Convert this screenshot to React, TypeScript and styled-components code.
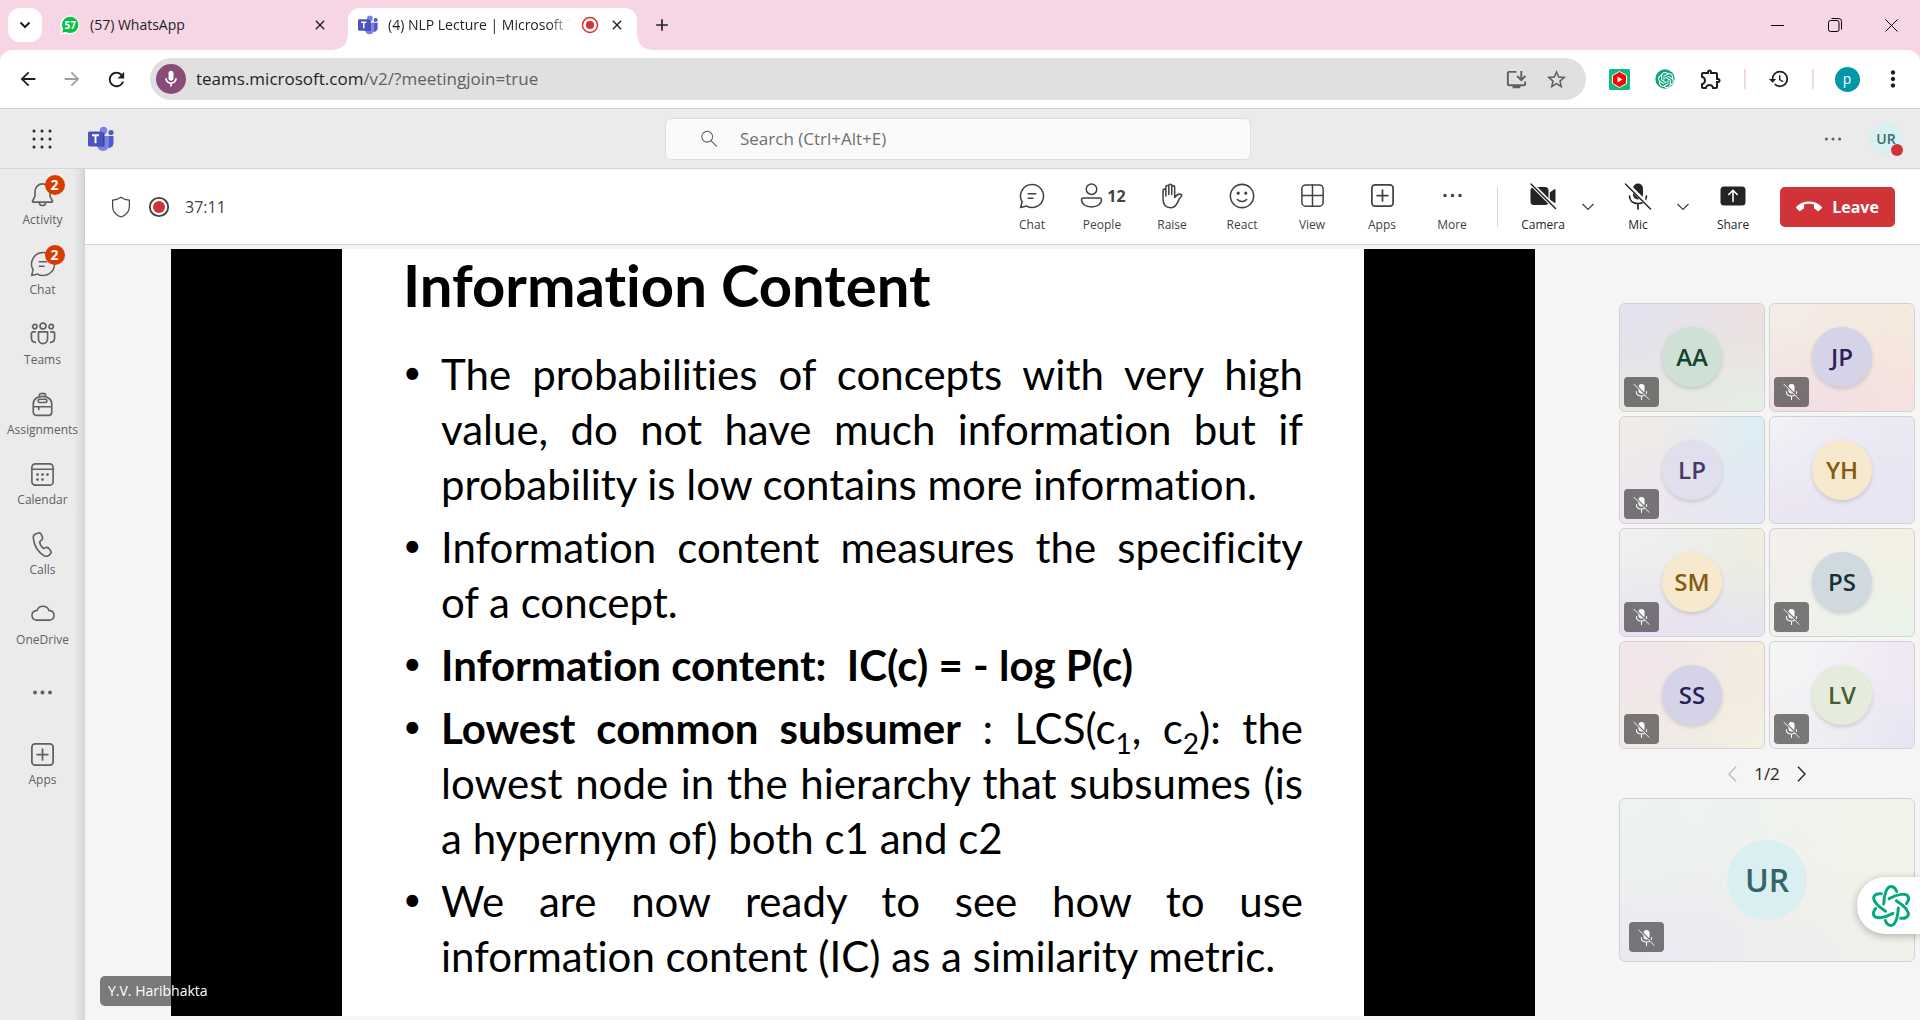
import React from 'react';
import styled, { createGlobalStyle, css } from 'styled-components';
import {
  MdArrowBack, MdArrowForward, MdCallEnd, MdHistory, MdMoreVert, MdOutlineExtension,
  MdOutlineInstallDesktop, MdOutlineMic, MdRefresh, MdStarBorder, MdAdd, MdClose,
} from 'react-icons/md';
import { SiOpenai } from 'react-icons/si';

const GlobalStyle = createGlobalStyle`
  * { box-sizing: border-box; }
  body {
    margin: 0;
    background: #f5f5f5;
    color: #242424;
    font-family: "Open Sans", "Noto Sans", sans-serif;
    font-size: 16px;
  }
  button { font: inherit; color: inherit; border: 0; background: none; padding: 0; cursor: pointer; }
  a { color: inherit; text-decoration: none; }
  svg { display: block; flex: none; }
`;

/* ---------- layout ---------- */

const Page = styled.div`
  min-height: 100vh;
  display: flex;
  flex-direction: column;
`;

const Body = styled.div`
  flex: 1;
  display: flex;
`;

const Main = styled.main`
  flex: 1;
  min-width: 0;
  display: flex;
  flex-direction: column;
`;

/* ---------- browser ---------- */

const TabStrip = styled.header`
  display: flex;
  align-items: flex-start;
  height: 50px;
  padding: 8px 0 0 8px;
  background: #f6d5e4;
`;

const TabSearch = styled.button`
  display: grid;
  place-items: center;
  width: 34px;
  height: 34px;
  margin-right: 6px;
  border-radius: 12px;
  background: #fff;
`;

const Tab = styled.div<{ $active?: boolean }>`
  position: relative;
  display: flex;
  align-items: center;
  gap: 10px;
  width: ${p => (p.$active ? 289 : 300)}px;
  height: ${p => (p.$active ? 42 : 34)}px;
  padding: ${p => (p.$active ? '0 12px 8px 10px' : '0 20px 0 12px')};
  border-radius: 12px 12px 0 0;
  color: #1f1f1f;
  ${p => p.$active && css`
    background: #fff;
    &::before, &::after {
      content: '';
      position: absolute;
      bottom: 0;
      width: 14px;
      height: 14px;
    }
    &::before { right: 100%; background: radial-gradient(circle at 0 0, transparent 13px, #fff 14px); }
    &::after { left: 100%; background: radial-gradient(circle at 100% 0, transparent 13px, #fff 14px); }
  `}
`;

const TabTitle = styled.span<{ $fade?: boolean }>`
  flex: 1;
  min-width: 0;
  overflow: hidden;
  white-space: nowrap;
  font-size: 14px;
  line-height: 20px;
  ${p => p.$fade && css`mask-image: linear-gradient(90deg, #000 88%, transparent);`}
`;

const SmallButton = styled.button`
  display: grid;
  place-items: center;
  width: 16px;
  height: 34px;
`;

const NewTab = styled(SmallButton)`
  width: 50px;
`;

const WindowControls = styled.div`
  display: flex;
  margin-left: auto;
`;

const WindowButton = styled(SmallButton)`
  width: 57px;
`;

const ToolbarBack = styled.div`
  background: #f6d5e4;
`;

const Toolbar = styled.div`
  display: flex;
  align-items: center;
  height: 59px;
  padding: 0 4px 0 6px;
  border-bottom: 1px solid #cfcfcf;
  border-radius: 12px 12px 0 0;
  background: #fff;
  color: #1f1f1f;
`;

const ToolButton = styled.button<{ $width?: number; $dim?: boolean }>`
  display: grid;
  place-items: center;
  width: ${p => p.$width ?? 44}px;
  height: 42px;
  color: ${p => (p.$dim ? '#9e9e9e' : 'inherit')};
`;

const AddressBar = styled.div`
  flex: 1;
  display: flex;
  align-items: center;
  gap: 10px;
  height: 42px;
  margin: 0 10px 0 12px;
  padding: 0 10px 0 6px;
  border-radius: 21px;
  background: #e0e0e0;
`;

const SiteMic = styled.button`
  display: grid;
  place-items: center;
  width: 30px;
  height: 30px;
  border-radius: 50%;
  background: #894b78;
  color: #fff;
`;

const Url = styled.a`
  flex: 1;
  font-size: 17px;
  line-height: 24px;
  color: #5f6063;
  b { font-weight: 400; color: #1f1f1f; }
`;

const AddressActions = styled.div`
  display: flex;
  color: #5f6063;
`;

const PinkRule = styled.i`
  width: 2px;
  height: 20px;
  margin: 0 10px;
  background: #f6d5e4;
`;

const Profile = styled.span`
  display: grid;
  place-items: center;
  width: 25px;
  height: 25px;
  border-radius: 50%;
  background: #0097a7;
  color: #fff;
  font-size: 14px;
  line-height: 20px;
`;

/* ---------- Teams header ---------- */

const TeamsHeader = styled.div`
  display: grid;
  grid-template-columns: 1fr 586px 1fr;
  align-items: center;
  height: 60px;
  padding: 0 17px 0 13px;
  border-bottom: 1px solid #d6d6d6;
  background: #ebebeb;
`;

const HeaderSide = styled.div<{ $end?: boolean }>`
  display: flex;
  align-items: center;
  gap: ${p => (p.$end ? 25 : 35)}px;
  padding-left: 18px;
  ${p => p.$end && css`justify-content: flex-end; color: #616161;`}
`;

const SearchBox = styled.label`
  display: flex;
  align-items: center;
  gap: 20px;
  height: 42px;
  padding: 0 34px;
  border: 1px solid #dedede;
  border-radius: 6px;
  background: #fafafa;
  color: #616161;
  font-size: 17px;
  input {
    flex: 1;
    min-width: 0;
    border: 0;
    outline: 0;
    background: none;
    font: inherit;
    line-height: 24px;
    color: inherit;
  }
  input::placeholder { color: #707070; opacity: 1; }
`;

const Me = styled.button`
  position: relative;
  width: 34px;
  height: 34px;
  border-radius: 50%;
  background: #d9eff2;
  color: #3a6b70;
  font-size: 14px;
  font-weight: 600;
  line-height: 20px;
`;

const Busy = styled.i`
  position: absolute;
  right: 0;
  bottom: 0;
  width: 12px;
  height: 12px;
  border-radius: 50%;
  background: #d13438;
`;

/* ---------- left rail ---------- */

const Rail = styled.nav`
  display: flex;
  flex-direction: column;
  align-items: stretch;
  width: 85px;
  background: linear-gradient(90deg, #ebebeb 74px, #e4e4e4 78px, #d4d4d4 85px);
  color: #616161;
`;

const RailItem = styled.button<{ $bare?: boolean }>`
  display: flex;
  flex-direction: column;
  align-items: center;
  gap: 2px;
  height: 70px;
  padding-top: ${p => (p.$bare ? 18 : 10)}px;
  font-size: 12px;
  line-height: 18px;
`;

const RailIcon = styled.span`
  position: relative;
  display: grid;
  place-items: center;
  width: 30px;
  height: 30px;
`;

const Badge = styled.b`
  position: absolute;
  top: -4px;
  left: 17px;
  display: grid;
  place-items: center;
  width: 20px;
  height: 20px;
  border-radius: 50%;
  background: #da3b01;
  color: #fff;
  font-size: 14px;
  font-weight: 700;
  line-height: 20px;
`;

/* ---------- meeting bar ---------- */

const MeetingBar = styled.div`
  position: relative;
  display: flex;
  align-items: center;
  height: 76px;
  padding: 0 25px 0 24px;
  border-bottom: 1px solid #d8d8d8;
  background: #fff;
  box-shadow: 0 1px 2px rgba(0, 0, 0, 0.08);
`;

const MeetingStatus = styled.div`
  display: flex;
  align-items: center;
  gap: 15px;
  color: #424242;
  font-size: 16px;
  line-height: 24px;
`;

const Actions = styled.div`
  display: flex;
  align-items: center;
  margin-left: auto;
`;

const Action = styled.button<{ $dark?: boolean }>`
  display: flex;
  flex-direction: column;
  align-items: center;
  gap: 6px;
  width: 70px;
  padding-top: 2px;
  font-size: 12px;
  line-height: 18px;
  color: ${p => (p.$dark ? '#242424' : '#424242')};
`;

const ActionIcon = styled.span`
  display: flex;
  align-items: center;
  gap: 2px;
  height: 28px;
  font-size: 16px;
  font-weight: 700;
`;

const Caret = styled.button`
  display: grid;
  place-items: center;
  width: 20px;
  height: 46px;
  margin-right: 5px;
  color: #424242;
`;

const Rule = styled.i`
  width: 1px;
  height: 40px;
  margin: 0 10px;
  background: #d6d6d6;
`;

const Leave = styled.button`
  display: flex;
  align-items: center;
  justify-content: center;
  gap: 10px;
  width: 115px;
  height: 40px;
  margin-left: 12px;
  border-radius: 5px;
  background: #d13438;
  color: #fff;
  font-size: 16px;
  font-weight: 700;
  line-height: 24px;
`;

/* ---------- stage ---------- */

const Stage = styled.div`
  flex: 1;
  position: relative;
  display: flex;
  gap: 84px;
  padding: 4px 5px 4px 86px;
  background: #f5f5f5;
`;

const Screen = styled.section`
  flex: 1;
  min-width: 0;
  display: flex;
  padding: 0 171px;
  background: #000;
`;

const Slide = styled.article`
  flex: 1;
  padding: 2px 61px 0;
  background: #fff;
  color: #000;
  font-family: Lato, "Liberation Sans", sans-serif;
  font-variant-ligatures: none;
`;

const SlideTitle = styled.h1`
  margin: 0 0 28px;
  font-size: 58px;
  font-weight: 700;
  line-height: 68px;
`;

const Bullets = styled.ul`
  display: flex;
  flex-direction: column;
  gap: 8px;
  margin: 0;
  padding: 0;
  list-style: none;
  font-size: 42px;
  line-height: 55px;
`;

const Bullet = styled.li`
  display: flex;
  &::before { content: '•'; flex: 0 0 38px; font-size: 32px; line-height: 50px; }
`;

const Point = styled.p<{ $strong?: boolean }>`
  flex: 1;
  margin: 0;
  text-align: justify;
  font-weight: ${p => (p.$strong ? 700 : 400)};
  white-space: ${p => (p.$strong ? 'pre' : 'normal')};
  sub { font-size: 28px; line-height: 0; vertical-align: -10px; }
`;

const Presenter = styled.span`
  position: absolute;
  left: 15px;
  bottom: 14px;
  padding: 4px 8px;
  border-radius: 5px;
  background: rgba(0, 0, 0, 0.5);
  color: #fff;
  font-size: 14px;
  line-height: 22px;
`;

/* ---------- participants ---------- */

const Gallery = styled.aside`
  flex: 0 0 296px;
  padding-top: 54px;
`;

const Tiles = styled.div`
  display: grid;
  grid-template-columns: 1fr 1fr;
  grid-template-rows: repeat(4, 1fr);
  gap: 4px;
  height: 446px;
`;

const Tile = styled.div<{ $bg: string; $large?: boolean }>`
  position: relative;
  display: grid;
  place-items: center;
  ${p => p.$large && css`height: 164px;`}
  border: 1px solid #d3d1d6;
  border-radius: 6px;
  background: ${p => p.$bg};
`;

const Avatar = styled.span<{ $bg: string; $fg: string; $large?: boolean }>`
  display: grid;
  place-items: center;
  width: ${p => (p.$large ? 80 : 60)}px;
  height: ${p => (p.$large ? 80 : 60)}px;
  border-radius: 50%;
  background: ${p => p.$bg};
  color: ${p => p.$fg};
  font-size: ${p => (p.$large ? 32 : 24)}px;
  font-weight: 600;
  line-height: 40px;
  box-shadow: ${p => (p.$large ? 'none' : '0 2px 4px rgba(0, 0, 0, 0.14)')};
`;

const Muted = styled.span<{ $inset?: number }>`
  position: absolute;
  left: ${p => p.$inset ?? 4}px;
  bottom: ${p => p.$inset ?? 4}px;
  display: grid;
  place-items: center;
  width: 35px;
  height: 30px;
  border-radius: 4px;
  background: rgba(0, 0, 0, 0.5);
  color: #fff;
`;

const Pager = styled.div`
  display: flex;
  align-items: center;
  justify-content: center;
  gap: 12px;
  height: 49px;
  font-size: 17px;
  line-height: 24px;
`;

const PageButton = styled(SmallButton)`
  width: 20px;
  &:disabled { color: #bdbdbd; }
`;

const Assistant = styled.button`
  position: fixed;
  right: 0;
  bottom: 86px;
  display: flex;
  align-items: center;
  width: 63px;
  height: 57px;
  padding-left: 12px;
  border-radius: 28px 0 0 28px;
  background: #fff;
  box-shadow: 0 2px 8px rgba(0, 0, 0, 0.28);
`;

/* ---------- icons ---------- */

type IconProps = { size?: number; width?: number; children: React.ReactNode };

const Line = ({ size = 25, width = 1.3, children }: IconProps) => (
  <svg width={size} height={size} viewBox="0 0 20 20" fill="none" stroke="currentColor"
    strokeWidth={width} strokeLinecap="round" strokeLinejoin="round" aria-hidden="true">
    {children}
  </svg>
);

const ChatIcon = () => (
  <Line size={28} width={1.1}>
    <path d="M10 1.800a8.200 8.200 0 1 1-3.900 15.400L1.900 18.200l1-4.100A8.200 8.200 0 0 1 10 1.800ZM7.300 8.400h5.400M7.300 11.600h3.400" />
  </Line>
);
const PersonIcon = () => (
  <Line size={27} width={1.1}>
    <circle cx="10" cy="5.300" r="3.900" />
    <path d="M4 11.800h12c.8 0 1.400.6 1.400 1.400 0 3.200-3.100 5.300-7.400 5.300s-7.400-2.100-7.400-5.300c0-.8.6-1.400 1.400-1.400Z" />
  </Line>
);
const HandIcon = () => (
  <Line size={28} width={1.1}>
    <path d="M3.600 12V6.200c0-1.500 2-1.500 2 0V10M5.600 9V3.600c0-1.500 2.100-1.500 2.100 0V9M7.700 8.500V2.700c0-1.500 2.100-1.500 2.100 0V8.500M9.800 9V3.700c0-1.500 2.100-1.500 2.100 0v7.400c1.300-1.900 3-2.900 4.700-2.200.4.2.5.7.2 1.100-1.200 1.100-2.100 3.200-3 4.900-1.100 2.200-2.300 3.500-4.700 3.500-3.600 0-5.500-2.100-5.500-6.400" />
  </Line>
);
const SmileIcon = () => (
  <Line size={28} width={1.1}>
    <circle cx="10" cy="10" r="8.300" />
    <path d="M6.700 12.500c1.700 1.900 4.900 1.900 6.600 0" />
    <circle cx="7.300" cy="8" r=".6" fill="currentColor" />
    <circle cx="12.700" cy="8" r=".6" fill="currentColor" />
  </Line>
);
const ViewIcon = () => (
  <Line width={1.2}>
    <rect x="1.500" y="1.500" width="17" height="17" rx="3" />
    <path d="M10 1.500v17M1.500 10h17" />
  </Line>
);
const AppsIcon = () => (
  <Line width={1.4}>
    <rect x="1.500" y="1.500" width="17" height="17" rx="2.600" />
    <path d="M10 5.700v8.600M5.700 10h8.600" />
  </Line>
);
const Dots = ({ size = 25, r = 1.6 }: { size?: number; r?: number }) => (
  <svg width={size} height={size} viewBox="0 0 20 20" fill="currentColor" aria-hidden="true">
    <circle cx="4" cy="10" r={r} /><circle cx="10" cy="10" r={r} /><circle cx="16" cy="10" r={r} />
  </svg>
);
const CameraOff = () => (
  <svg width="28" height="28" viewBox="0 0 28 28" fill="currentColor" aria-hidden="true">
    <path d="M5.500 5H16a3.500 3.500 0 0 1 3.500 3.500v11A3.500 3.500 0 0 1 16 23H5a3.500 3.500 0 0 1-3.500-3.500v-11C1.500 6.500 3 5 5.500 5ZM20.800 10.500l4.600-3.200c.6-.4 1.100-.1 1.100.5v12.400c0 .6-.5.9-1.100.5l-4.600-3.200Z" />
    <path d="M1.500 1 27 26.500" stroke="#fff" strokeWidth="4" />
    <path d="M2 2l24.500 24.500" stroke="currentColor" strokeWidth="1.500" strokeLinecap="round" />
  </svg>
);
const MicOff = ({ size = 28, gap = '#fff', gapWidth = 4 }: { size?: number; gap?: string; gapWidth?: number }) => (
  <svg width={size} height={size} viewBox="0 0 28 28" fill="none" stroke="currentColor"
    strokeWidth="1.700" strokeLinecap="round" aria-hidden="true">
    <rect x="9" y="1.500" width="10" height="16" rx="5" fill="currentColor" stroke="none" />
    <path d="M5.500 14c0 4.700 3.600 7.500 8.500 7.500s8.500-2.800 8.500-7.500M14 21.500V27" />
    <path d="M2 1l25 25" stroke={gap} strokeWidth={gapWidth} strokeLinecap="butt" />
    <path d="M1.500 2l25 25" strokeWidth="1.500" />
  </svg>
);
const ShareIcon = () => (
  <svg width="26" height="28" viewBox="0 0 26 28" aria-hidden="true">
    <rect x=".5" y="4.500" width="25" height="19" rx="3.500" fill="currentColor" />
    <path d="M13 19.500v-11M8.800 12.500 13 8.300l4.200 4.200" fill="none" stroke="#fff" strokeWidth="1.600" strokeLinecap="round" />
  </svg>
);
const CaretIcon = () => (
  <svg width="12" height="8" viewBox="0 0 12 8" fill="none" stroke="currentColor" strokeWidth="1.200" aria-hidden="true">
    <path d="M.5 1 6 6.500 11.500 1" />
  </svg>
);
const BellIcon = () => (
  <Line>
    <path d="M10 1.500a6 6 0 0 0-6 6v4L2 15.200c-.2.500.1.900.6.900h14.800c.5 0 .8-.4.600-.9l-2-3.700v-4a6 6 0 0 0-6-6ZM7.500 16.500a2.500 2.300 0 0 0 5 0" />
  </Line>
);
const PeopleIcon = () => (
  <Line size={26} width={1.3}>
    <circle cx="10" cy="3.900" r="2.300" /><circle cx="3.700" cy="4.300" r="1.700" /><circle cx="16.300" cy="4.300" r="1.700" />
    <path d="M6.500 8.300h7v5.600c0 4.600-7 4.600-7 0V8.300ZM4 8.300H2.300c-.7 0-1.200.5-1.200 1.200v3.600c0 1.900 1.200 3.200 3.100 3.400M16 8.300h1.700c.7 0 1.200.5 1.200 1.200v3.600c0 1.900-1.200 3.200-3.100 3.400" />
  </Line>
);
const BackpackIcon = () => (
  <Line>
    <path d="M7.500 3.600V2.400c0-1.700 5-1.700 5 0v1.200M2.600 16.200V9.500c0-8 14.800-8 14.800 0v6.700c0 1.500-1 2.500-2.500 2.500H5.100c-1.500 0-2.500-1-2.500-2.500ZM2.600 11.800h14.800M7 11.800V14" />
    <rect x="6.500" y="5.800" width="7" height="2.600" rx="1.300" />
  </Line>
);
const CalendarIcon = () => (
  <Line>
    <rect x="1.500" y="1.500" width="17" height="17" rx="2.800" />
    <path d="M1.500 5.800h17" />
    <g fill="currentColor" stroke="none">
      <circle cx="6" cy="10" r="1.100" /><circle cx="10" cy="10" r="1.100" /><circle cx="14" cy="10" r="1.100" />
      <circle cx="6" cy="14" r="1.100" /><circle cx="10" cy="14" r="1.100" />
    </g>
  </Line>
);
const PhoneIcon = () => (
  <Line>
    <path d="M5.300 1.200 6.600.8c1-.3 2 .2 2.400 1.100l.9 2.200c.3.800.1 1.700-.5 2.200L7.700 7.800c.2 2.200 1.300 4.100 3 5.300l2.200-.7c.8-.2 1.600.1 2.100.7l1.400 1.900c.6.800.5 1.900-.2 2.600l-.9.900c-1.200 1.100-2.900 1.200-4.200.4C6.500 15.900 3.200 10.600 2.600 4.700c-.1-1.600 1.100-3.100 2.700-3.500Z" />
  </Line>
);
const CloudIcon = () => (
  <Line size={26} width={1.2}>
    <path d="M4.800 14.700a3.700 3.700 0 0 1-.3-7.300h.9a4.800 4.800 0 0 1 9.200 0h.9a3.700 3.700 0 0 1-.3 7.300H4.800Z" />
  </Line>
);
const ShieldIcon = () => (
  <Line size={24} width={1}>
    <path d="M10 1.800c2.100 1.600 4.400 2.200 7 2.400v5.300c0 4.200-2.600 7.100-7 8.800-4.400-1.700-7-4.600-7-8.800V4.200c2.600-.2 4.900-.8 7-2.400Z" />
  </Line>
);
const RecordIcon = ({ size, ring, dot = 6 }: { size: number; ring: string; dot?: number }) => (
  <svg width={size} height={size} viewBox="0 0 22 22" aria-hidden="true">
    <circle cx="11" cy="11" r="9.200" fill="none" stroke={ring} strokeWidth="1.800" />
    <circle cx="11" cy="11" r={dot} fill="#d13438" />
  </svg>
);
const TeamsLogo = ({ size }: { size: number }) => (
  <svg width={size} height={size} viewBox="0 0 26 26" role="img" aria-label="Teams">
    <circle cx="23" cy="6.500" r="2.600" fill="#5059c9" />
    <path d="M18 10h7.500v7.500a4.500 4.500 0 0 1-7.500 3.200Z" fill="#5059c9" />
    <circle cx="15.500" cy="4.500" r="3.700" fill="#7b83eb" />
    <path d="M9 10h12v9a6 6 0 0 1-12 0Z" fill="#7b83eb" />
    <path d="M9 7h7.500v13.500H9Z" fill="#3d449a" />
    <rect x="0" y="5.500" width="15" height="15" rx="1.500" fill="#4b53bc" />
    <path d="M4 9.300h7M7.500 9.300v8" stroke="#fff" strokeWidth="1.900" />
  </svg>
);
const WhatsAppIcon = () => (
  <svg width="20" height="20" viewBox="0 0 20 20" role="img" aria-label="57 unread">
    <path d="M10.200.5A9.400 9.400 0 1 1 6 18.400L.5 19.500l1-5A9.400 9.400 0 0 1 10.200.5Z" fill="#fff" />
    <circle cx="10.200" cy="9.900" r="8.200" fill="#0ac144" />
    <path d="M2.200 17.700l1.200-4.500 3.200 3.300Z" fill="#0ac144" />
    <text x="10.200" y="13.500" textAnchor="middle" fill="#fff" fontSize="10" fontWeight="700" fontFamily="Open Sans, sans-serif">57</text>
  </svg>
);
const WaffleIcon = () => (
  <svg width="22" height="22" viewBox="0 0 22 22" fill="#242424" aria-hidden="true">
    {[3, 11, 19].map(y => [3, 11, 19].map(x => <circle key={`${x}-${y}`} cx={x} cy={y} r="1.500" />))}
  </svg>
);
const SearchIcon = () => (
  <Line size={18} width={1.2}>
    <circle cx="8" cy="7.500" r="6" /><path d="m12.400 12 6 6" />
  </Line>
);
const VideoExtension = () => (
  <svg width="21" height="21" viewBox="0 0 21 21" aria-hidden="true">
    <rect width="21" height="21" rx="1.500" fill="#12b886" />
    <path d="M10.500 2.500 17.500 6.500v8l-7 4-7-4v-8Z" fill="#f00" stroke="#fff" strokeWidth="1" />
    <path d="M8.500 7.500v6l5-3Z" fill="#fff" />
  </svg>
);
const GptExtension = () => (
  <svg width="20" height="20" viewBox="0 0 20 20" aria-hidden="true">
    <circle cx="10" cy="10" r="9.700" fill="#10a37f" />
    <SiOpenai x="3" y="3" width="14" height="14" color="#fff" />
  </svg>
);
const AssistantIcon = () => (
  <svg width="44" height="44" viewBox="-22 -22 44 44" fill="none" stroke="#06a880" strokeWidth="3" strokeLinecap="round" aria-hidden="true">
    {[0, 60, 120, 180, 240, 300].map(a => (
      <path key={a} transform={`rotate(${a})`} d="M-7.300-2C-7-12-4-19.500 0-19.500c2.500 0 4.500 2 5.700 5" />
    ))}
  </svg>
);
const PageArrow = ({ flip }: { flip?: boolean }) => (
  <svg width="9" height="16" viewBox="0 0 9 16" fill="none" stroke="currentColor" strokeWidth="1.400" aria-hidden="true">
    <path d={flip ? 'M8 .8 1 8l7 7.200' : 'M1 .8 8 8l-7 7.200'} />
  </svg>
);

/* ---------- data ---------- */

const railItems = [
  { label: 'Activity', icon: <BellIcon />, count: 2 },
  { label: 'Chat', icon: <ChatIcon />, count: 2 },
  { label: 'Teams', icon: <PeopleIcon /> },
  { label: 'Assignments', icon: <BackpackIcon /> },
  { label: 'Calendar', icon: <CalendarIcon /> },
  { label: 'Calls', icon: <PhoneIcon /> },
  { label: 'OneDrive', icon: <CloudIcon /> },
  { label: '', icon: <Dots /> },
  { label: 'Apps', icon: <AppsIcon /> },
];

const actions = [
  { label: 'Chat', icon: <ChatIcon /> },
  { label: 'People', icon: <><PersonIcon />12</> },
  { label: 'Raise', icon: <HandIcon /> },
  { label: 'React', icon: <SmileIcon /> },
  { label: 'View', icon: <ViewIcon /> },
  { label: 'Apps', icon: <AppsIcon /> },
  { label: 'More', icon: <Dots r={1.4} /> },
];

const wash = (tl: string, tr: string, bl: string, br: string, mid: string) =>
  `radial-gradient(ellipse at 0 0, ${tl}, transparent 65%), radial-gradient(ellipse at 100% 0, ${tr}, transparent 65%), ` +
  `radial-gradient(ellipse at 0 100%, ${bl}, transparent 65%), radial-gradient(ellipse at 100% 100%, ${br}, transparent 65%), ${mid}`;

const people = [
  { name: 'AA', bg: '#cfe0d6', fg: '#17432c', tile: wash('#e4e2f0', '#eee0e0', '#ebe8e2', '#e6efe6', '#e4e4e4'), muted: true },
  { name: 'JP', bg: '#d5d3e8', fg: '#2a2158', tile: wash('#f4efe9', '#f5ecdf', '#f1dfe9', '#f5e2e2', '#f5e0d9'), muted: true },
  { name: 'LP', bg: '#e1deed', fg: '#453a66', tile: wash('#f2ece7', '#dceef6', '#eee6f2', '#e4e8f5', '#e7e7ec'), muted: true },
  { name: 'YH', bg: '#f7e9cd', fg: '#855b12', tile: wash('#f2f2f6', '#ebe9f3', '#ebe6f2', '#e9e4f2', '#e7e4f2'), muted: false },
  { name: 'SM', bg: '#f7e9cd', fg: '#855b12', tile: wash('#f0f2f2', '#f0eedf', '#ebdff5', '#e6e4f0', '#e7eae8'), muted: true },
  { name: 'PS', bg: '#cfd9df', fg: '#12323a', tile: wash('#f5efed', '#f3f1e2', '#f1f1f0', '#e9f4ea', '#eef0e6'), muted: true },
  { name: 'SS', bg: '#d5d3e8', fg: '#2a2158', tile: wash('#f2e6ec', '#f4eddf', '#efebe8', '#f3f1e2', '#f3e6e4'), muted: true },
  { name: 'LV', bg: '#e5ecdc', fg: '#4a5a31', tile: wash('#f6f6f6', '#efe8f5', '#f1f0f2', '#e6e4f3', '#f1edf4'), muted: true },
];

export default function App() {
  return (
    <Page>
      <GlobalStyle />
      <TabStrip>
        <TabSearch aria-label="Search tabs">
          <svg width="12" height="8" viewBox="0 0 12 8" fill="none" stroke="#1f1f1f" strokeWidth="2"><path d="m1.500 1.500 4.500 4.500 4.500-4.500" /></svg>
        </TabSearch>
        <Tab>
          <WhatsAppIcon />
          <TabTitle>(57) WhatsApp</TabTitle>
          <SmallButton aria-label="Close tab"><MdClose size={16} /></SmallButton>
        </Tab>
        <Tab $active>
          <TeamsLogo size={20} />
          <TabTitle $fade>(4) NLP Lecture | Microsoft Teams</TabTitle>
          <RecordIcon size={18} ring="#d93025" dot={5} />
          <SmallButton aria-label="Close tab"><MdClose size={16} /></SmallButton>
        </Tab>
        <NewTab aria-label="New tab"><MdAdd size={20} /></NewTab>
        <WindowControls>
          <WindowButton aria-label="Minimize"><svg width="13" height="13"><path d="M0 6.500h13" stroke="#000" /></svg></WindowButton>
          <WindowButton aria-label="Restore">
            <svg width="14" height="14" fill="none" stroke="#000"><rect x=".5" y="2.500" width="10.500" height="11" rx="2" /><path d="M3.500.5h7a3 3 0 0 1 3 3v8" /></svg>
          </WindowButton>
          <WindowButton aria-label="Close"><svg width="13" height="13" stroke="#000"><path d="m.5.5 12 12M12.500.5l-12 12" /></svg></WindowButton>
        </WindowControls>
      </TabStrip>

      <ToolbarBack>
        <Toolbar>
          <ToolButton aria-label="Back"><MdArrowBack size={22} /></ToolButton>
          <ToolButton aria-label="Forward" $dim><MdArrowForward size={22} /></ToolButton>
          <ToolButton aria-label="Reload"><MdRefresh size={23} /></ToolButton>
          <AddressBar>
            <SiteMic aria-label="Microphone in use"><MdOutlineMic size={20} /></SiteMic>
            <Url href="#"><b>teams.microsoft.com</b>/v2/?meetingjoin=true</Url>
            <AddressActions>
              <ToolButton $width={40} aria-label="Install"><MdOutlineInstallDesktop size={23} /></ToolButton>
              <ToolButton $width={40} aria-label="Bookmark"><MdStarBorder size={23} /></ToolButton>
            </AddressActions>
          </AddressBar>
          <ToolButton $width={46} aria-label="Video extension"><VideoExtension /></ToolButton>
          <ToolButton $width={46} aria-label="Chat extension"><GptExtension /></ToolButton>
          <ToolButton $width={46} aria-label="Extensions"><MdOutlineExtension size={24} /></ToolButton>
          <PinkRule />
          <ToolButton $width={46} aria-label="History"><MdHistory size={22} /></ToolButton>
          <PinkRule />
          <ToolButton $width={46} aria-label="Profile"><Profile>p</Profile></ToolButton>
          <ToolButton $width={46} aria-label="Menu"><MdMoreVert size={26} /></ToolButton>
        </Toolbar>
      </ToolbarBack>

      <TeamsHeader>
        <HeaderSide>
          <button aria-label="App launcher"><WaffleIcon /></button>
          <TeamsLogo size={26} />
        </HeaderSide>
        <SearchBox>
          <SearchIcon />
          <input type="text" placeholder="Search (Ctrl+Alt+E)" aria-label="Search" />
        </SearchBox>
        <HeaderSide $end>
          <button aria-label="Settings and more"><Dots size={22} r={1.4} /></button>
          <Me aria-label="Account">UR<Busy /></Me>
        </HeaderSide>
      </TeamsHeader>

      <Body>
        <Rail>
          {railItems.map(item => (
            <RailItem key={item.label || 'more'} $bare={!item.label} aria-label={item.label || 'More apps'}>
              <RailIcon>{item.icon}{item.count && <Badge>{item.count}</Badge>}</RailIcon>
              {item.label}
            </RailItem>
          ))}
        </Rail>

        <Main>
          <MeetingBar>
            <MeetingStatus>
              <ShieldIcon />
              <RecordIcon size={22} ring="#424242" />
              <span>37:11</span>
            </MeetingStatus>
            <Actions>
              {actions.map(a => (
                <Action key={a.label}><ActionIcon>{a.icon}</ActionIcon>{a.label}</Action>
              ))}
              <Rule />
              <Action $dark><ActionIcon><CameraOff /></ActionIcon>Camera</Action>
              <Caret aria-label="Camera options"><CaretIcon /></Caret>
              <Action $dark><ActionIcon><MicOff /></ActionIcon>Mic</Action>
              <Caret aria-label="Mic options"><CaretIcon /></Caret>
              <Action $dark><ActionIcon><ShareIcon /></ActionIcon>Share</Action>
              <Leave><MdCallEnd size={26} />Leave</Leave>
            </Actions>
          </MeetingBar>

          <Stage>
            <Screen>
              <Slide>
                <SlideTitle>Information Content</SlideTitle>
                <Bullets>
                  <Bullet><Point>The probabilities of concepts with very high value, do not have much information but if probability is low contains more information.</Point></Bullet>
                  <Bullet><Point>Information content measures the specificity of&nbsp;a concept.</Point></Bullet>
                  <Bullet><Point $strong>{'Information content:  IC(c) = - log P(c)'}</Point></Bullet>
                  <Bullet>
                    <Point><b>Lowest common subsumer</b> : LCS(c<sub>1</sub>, c<sub>2</sub>): the lowest node in the hierarchy that subsumes (is a&nbsp;hypernym of) both c1 and c2</Point>
                  </Bullet>
                  <Bullet><Point>We are now ready to see how to use information content (IC) as a similarity metric.</Point></Bullet>
                </Bullets>
              </Slide>
            </Screen>
            <Presenter>Y.V. Haribhakta</Presenter>

            <Gallery>
              <Tiles>
                {people.map(p => (
                  <Tile key={p.name} $bg={p.tile}>
                    <Avatar $bg={p.bg} $fg={p.fg}>{p.name}</Avatar>
                    {p.muted && <Muted><MicOff size={17} gap="#777" gapWidth={3} /></Muted>}
                  </Tile>
                ))}
              </Tiles>
              <Pager>
                <PageButton disabled aria-label="Previous page"><PageArrow flip /></PageButton>
                <span>1/2</span>
                <PageButton aria-label="Next page"><PageArrow /></PageButton>
              </Pager>
              <Tile $large $bg={wash('#eef3f3', '#f4f4ea', '#ebe8f3', '#f3f1ec', '#edf0ea')}>
                <Avatar $large $bg="#d9eff2" $fg="#346569">UR</Avatar>
                <Muted $inset={9}><MicOff size={17} gap="#777" gapWidth={3} /></Muted>
              </Tile>
            </Gallery>
          </Stage>
        </Main>
      </Body>

      <Assistant aria-label="Assistant"><AssistantIcon /></Assistant>
    </Page>
  );
}
